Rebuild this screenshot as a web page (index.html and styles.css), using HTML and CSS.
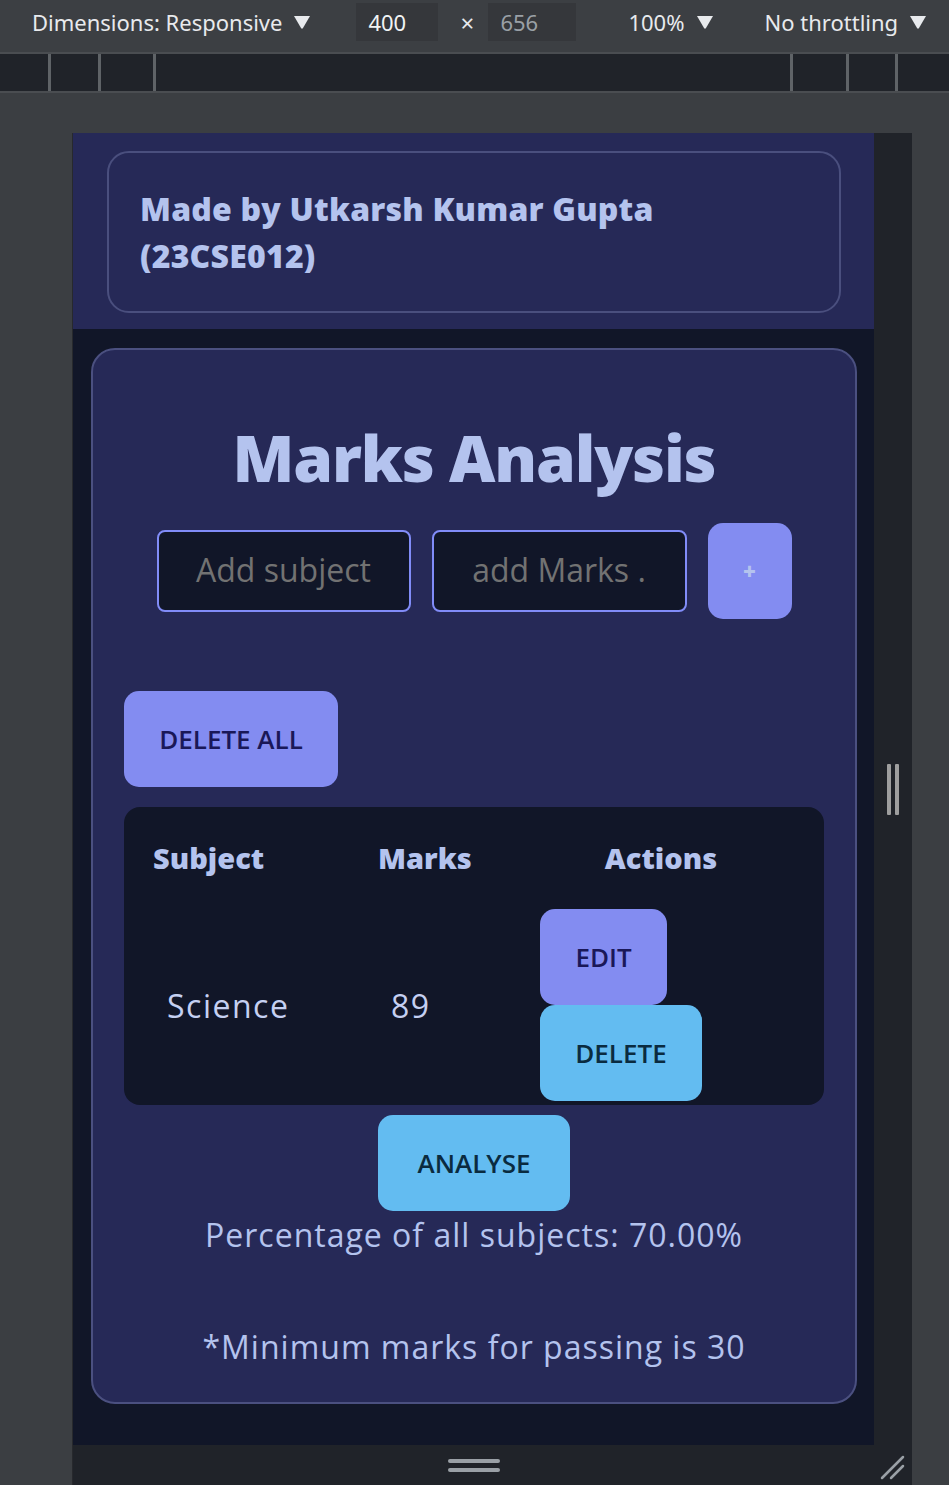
FILE: index.html
```html
<!DOCTYPE html>
<html lang="en">
<head>
<meta charset="utf-8">
<title>Marks Analysis</title>
<link rel="stylesheet" href="styles.css">
</head>
<body>
<div class="toolbar">
  <span class="tb-label">Dimensions: Responsive</span>
  <svg class="tri tri-dim" width="20" height="16" viewBox="0 0 20 16"><path d="M2 2 H18 L11 14 Q10 15.5 9 14 Z" fill="#e8eaed"/></svg>
  <span class="tb-box tb-w">400</span>
  <span class="tb-x">×</span>
  <span class="tb-box tb-h">656</span>
  <span class="tb-label tb-zoom">100%</span>
  <svg class="tri" width="20" height="16" viewBox="0 0 20 16"><path d="M2 2 H18 L11 14 Q10 15.5 9 14 Z" fill="#e8eaed"/></svg>
  <span class="tb-label tb-throttle">No throttling</span>
  <svg class="tri" width="20" height="16" viewBox="0 0 20 16"><path d="M2 2 H18 L11 14 Q10 15.5 9 14 Z" fill="#e8eaed"/></svg>
</div>
<div class="ruler">
  <div class="ticks ticks-left"><i></i><i></i><i></i></div>
  <div class="ticks ticks-right"><i></i><i></i><i></i></div>
</div>
<div class="stage">
  <div class="device">
    <div class="device-row">
      <div class="viewport">
        <header class="header">
          <div class="credit">Made by Utkarsh Kumar Gupta<br>(23CSE012)</div>
        </header>
        <main class="main">
          <section class="card">
            <h1 class="title">Marks Analysis</h1>
            <div class="add-row">
              <input class="field" type="text" placeholder="Add subject">
              <input class="field field-marks" type="text" placeholder="add Marks .">
              <button class="btn btn-indigo btn-plus">+</button>
            </div>
            <button class="btn btn-indigo btn-delete-all">DELETE ALL</button>
            <div class="table">
              <div class="th th-subject">Subject</div>
              <div class="th th-marks">Marks</div>
              <div class="th th-actions">Actions</div>
              <div class="td td-subject">Science</div>
              <div class="td td-marks">89</div>
              <div class="td td-actions">
                <button class="btn btn-indigo btn-edit">EDIT</button>
                <button class="btn btn-sky btn-delete">DELETE</button>
              </div>
            </div>
            <button class="btn btn-sky btn-analyse">ANALYSE</button>
            <p class="result">Percentage of all subjects: 70.00%</p>
            <p class="note">*Minimum marks for passing is 30</p>
          </section>
        </main>
      </div>
      <div class="rhandle"><i></i><i></i></div>
    </div>
    <div class="bhandle">
      <span></span>
      <div class="bars"><i></i><i></i></div>
      <span></span>
      <svg class="corner" width="28" height="28" viewBox="0 0 28 28"><path d="M3 25 L24 4 M12 25 L24 13" stroke="#9aa0a6" stroke-width="2.5" stroke-linecap="round"/></svg>
    </div>
  </div>
</div>
</body>
</html>
```
FILE: styles.css
```css
* { box-sizing: border-box; }
html, body { margin: 0; padding: 0; }
body {
  background: #3b3e42;
  font-family: "Open Sans", "Noto Sans", sans-serif;
  width: 949px;
  height: 1485px;
  overflow: hidden;
}

/* DevTools toolbar */
.toolbar {
  height: 54px;
  background: #3c3f43;
  border-bottom: 2px solid #4a4d51;
  display: flex;
  align-items: center;
  color: #e8eaed;
  font-size: 22px;
  font-family: "Noto Sans", "Open Sans", sans-serif;
  padding-left: 32px;
  padding-bottom: 8px;
}
.tb-label { white-space: nowrap; }
.tri { margin-left: 10px; flex: none; }
.tb-box {
  background: #35373b;
  height: 38px;
  display: flex;
  align-items: center;
  padding-left: 12px;
}
.tb-w { width: 82px; margin-left: 44px; color: #f1f3f4; }
.tb-x { margin-left: 22px; width: 28px; font-size: 24px; }
.tb-h { width: 88px; color: #9aa0a6; }
.tb-zoom { margin-left: 52px; }
.tb-throttle { margin-left: 50px; }

.ruler {
  height: 39px;
  background: #202329;
  border-bottom: 2px solid #4a4d51;
  display: flex;
  justify-content: space-between;
}
.ticks { display: flex; }
.ticks i { display: block; width: 3px; height: 100%; background: #5f6367; }
.ticks-left { padding-left: 48px; }
.ticks-left i:nth-child(2) { margin-left: 47px; }
.ticks-left i:nth-child(3) { margin-left: 52px; }
.ticks-right { padding-right: 51px; }
.ticks-right i:nth-child(2) { margin-left: 53px; }
.ticks-right i:nth-child(3) { margin-left: 46px; }

/* Device frame */
.stage { padding: 40px 0 0 72px; }
.device { width: 840px; border-left: 1px solid #27292d; }
.device-row { display: flex; }
.viewport {
  width: 801px;
  height: 1312px;
  background: #111628;
  overflow: hidden;
  font-family: "Open Sans", "Noto Sans", sans-serif;
}
.rhandle {
  width: 38px;
  background: #202329;
  display: flex;
  justify-content: center;
  align-items: center;
  gap: 4px;
}
.rhandle i { display: block; width: 4px; height: 51px; background: #9e9e9e; border-radius: 1px; }
.bhandle {
  height: 40px;
  background: #202329;
  display: grid;
  grid-template-columns: 1fr 52px 1fr 38px;
  width: 839px;
  align-items: center;
}
.bars { display: flex; flex-direction: column; gap: 5px; }
.bars i { display: block; width: 52px; height: 4px; background: #9aa0a6; border-radius: 2px; }
.corner { justify-self: end; margin-right: 5px; margin-top: 4px; }

/* App */
.header {
  background: #262957;
  padding: 18px 33px 16px 34px;
}
.credit {
  border: 2px solid #4a4f7e;
  border-radius: 22px;
  padding: 32px 31px;
  color: #b4c3ee;
  font-weight: 800;
  font-size: 32px;
  line-height: 47px;
  letter-spacing: 0.2px;
}
.main { padding: 19px 17px 41px 18px; }
.card {
  background: #262957;
  border: 2px solid #4b5080;
  border-radius: 24px;
  padding: 0 31px 31px;
  display: flex;
  flex-direction: column;
  height: 1056px;
}
.title {
  margin: 60px 0 0;
  text-align: center;
  color: #b4c3ee;
  font-size: 64px;
  line-height: 96px;
  font-weight: 800;
  letter-spacing: -1.2px;
}
.add-row {
  margin-top: 17px;
  height: 96px;
  display: flex;
  justify-content: center;
  align-items: center;
  gap: 21px;
}
.field {
  width: 254px;
  height: 82px;
  border: 2px solid #818cf8;
  border-radius: 8px;
  background: #111628;
  color: #c5d0f2;
  font-family: inherit;
  font-size: 32px;
  text-align: center;
  outline: none;
  padding: 0 8px 4px;
}
.field::placeholder { color: #727272; }
.field-marks { width: 255px; }
.btn {
  border: none;
  font-family: inherit;
  font-weight: 600;
  font-size: 26px;
  border-radius: 15px;
  height: 96px;
  padding: 0;
  cursor: pointer;
}
.btn-indigo { background: #838cf1; color: #1a1858; }
.btn-sky { background: #63bcf1; color: #0a2b40; }
.btn-plus { width: 84px; color: #b4c3ee; font-size: 22px; font-weight: 800; }
.btn-delete-all { margin-top: 72px; width: 214px; align-self: flex-start; }
.table {
  margin-top: 20px;
  height: 298px;
  background: #111628;
  border-radius: 16px;
  padding: 30px 29px 4px;
  display: grid;
  grid-template-columns: 225px 162px 242px;
  grid-template-rows: 42px 192px;
  row-gap: 30px;
  align-items: center;
}
.th {
  color: #b4c3ee;
  font-weight: 800;
  font-size: 29px;
  line-height: 42px;
}
.th-actions { text-align: center; }
.td { color: #c5d0f2; font-size: 32px; letter-spacing: 1.5px; }
.td-subject { padding-left: 14px; }
.td-marks { padding-left: 13px; }
.td-actions { display: flex; flex-direction: column; align-items: flex-start; letter-spacing: 0; }
.btn-edit { width: 127px; }
.btn-delete { width: 162px; }
.btn-analyse { margin-top: 10px; width: 192px; align-self: center; }
.result, .note {
  margin: 0;
  text-align: center;
  color: #b4c3ee;
  font-size: 32px;
  line-height: 48px;
  letter-spacing: 1px;
}
.note { margin-top: 64px; }
```
